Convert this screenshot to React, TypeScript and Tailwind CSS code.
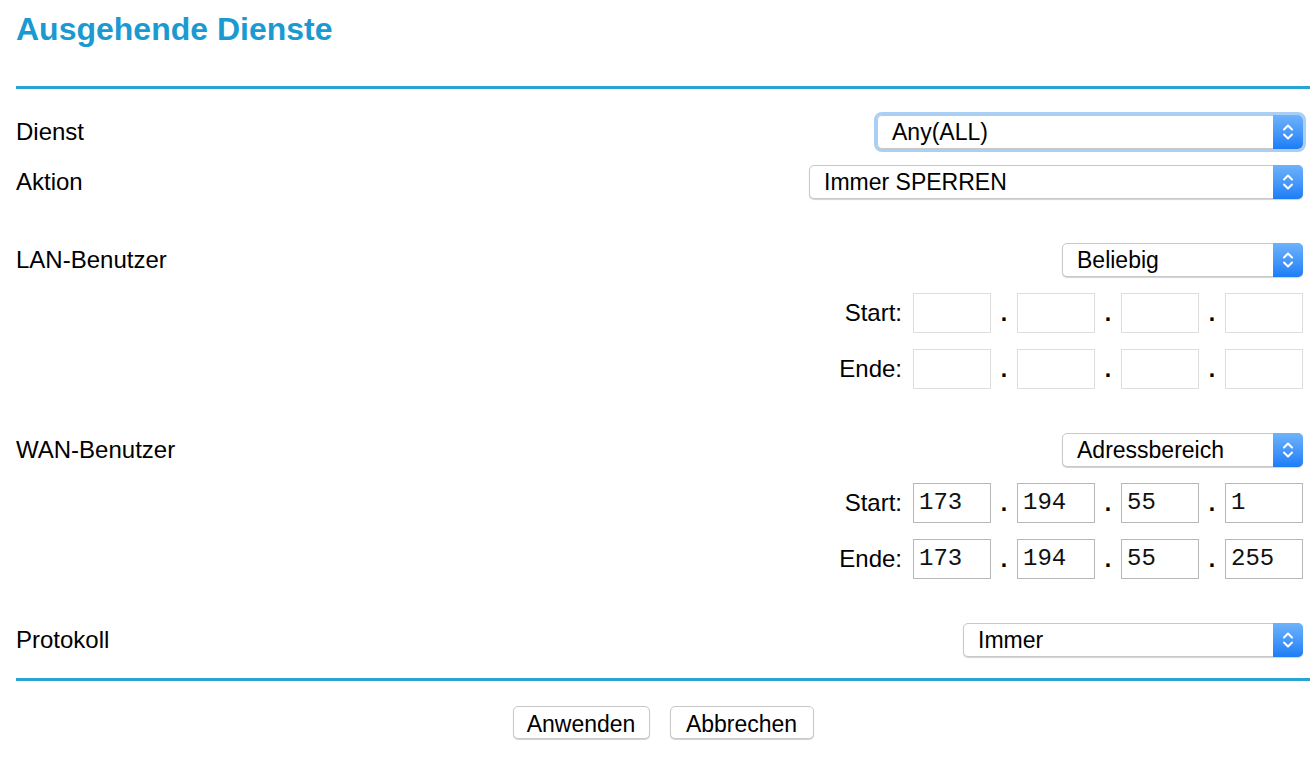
import React from "react";

const font = { fontFamily: '"Liberation Sans", Arial, Helvetica, sans-serif' };

function Select({ value, width, focus = false }: { value: string; width: string; focus?: boolean }) {
  return (
    <div
      className={`relative flex h-[34px] ${width} items-stretch rounded-[5px] border border-[#c8c8c8] bg-white shadow-[0_1px_1px_rgba(0,0,0,0.18)] ${
        focus ? "outline outline-[3px] outline-[#a9cff5] outline-offset-0" : ""
      }`}
    >
      <div className="flex flex-1 items-center pl-[14px] text-[23px] text-black">{value}</div>
      <div className="-my-px -mr-px flex w-[30px] items-center justify-center rounded-r-[5px] bg-gradient-to-b from-[#6db3fb] to-[#1b7df6]">
        <svg width="12" height="20" viewBox="0 0 12 20" fill="none">
          <path d="M2 7.5 L6 3.5 L10 7.5" stroke="white" strokeWidth="2" strokeLinecap="round" strokeLinejoin="round" />
          <path d="M2 12.5 L6 16.5 L10 12.5" stroke="white" strokeWidth="2" strokeLinecap="round" strokeLinejoin="round" />
        </svg>
      </div>
    </div>
  );
}

function IpBox({ value, filled }: { value: string; filled: boolean }) {
  return (
    <div
      className={`flex h-[40px] w-[78px] items-center border pl-[5px] text-[24px] text-[#111] ${
        filled ? "border-[#b8b8b8]" : "border-[#dedede]"
      }`}
      style={{ fontFamily: '"Courier New", "Liberation Mono", monospace' }}
    >
      {value}
    </div>
  );
}

function IpRow({ label, values }: { label: string; values: string[] }) {
  const filled = values.some((v) => v !== "");
  return (
    <div className="flex h-[56px] items-center justify-end">
      <span className="mr-[11px] text-[24px]">{label}</span>
      {values.map((v, i) => (
        <React.Fragment key={i}>
          {i > 0 && (
            <span className="flex w-[26px] justify-center text-[23px] font-bold leading-none">.</span>
          )}
          <IpBox value={v} filled={filled} />
        </React.Fragment>
      ))}
    </div>
  );
}

function Row({ label, children }: { label: string; children: React.ReactNode }) {
  return (
    <div className="flex h-[50px] items-center justify-between">
      <span className="text-[24px]">{label}</span>
      {children}
    </div>
  );
}

export default function App() {
  return (
    <div className="min-h-[774px] w-[1310px] bg-white text-black" style={font}>
      <div className="pl-[16px]">
        <h1 className="pt-[9px] text-[32px] font-bold leading-[40px] text-[#1b9ad2]">Ausgehende Dienste</h1>
        <div className="mt-[37px] h-[3px] bg-[#2aa3d3]" />
        <div className="pr-[7px]">
          <div className="mt-[18px]">
            <Row label="Dienst">
              <Select value="Any(ALL)" width="w-[426px]" focus />
            </Row>
            <Row label="Aktion">
              <Select value="Immer SPERREN" width="w-[494px]" />
            </Row>
          </div>
          <div className="mt-[28px]">
            <Row label="LAN-Benutzer">
              <Select value="Beliebig" width="w-[241px]" />
            </Row>
            <IpRow label="Start:" values={["", "", "", ""]} />
            <IpRow label="Ende:" values={["", "", "", ""]} />
          </div>
          <div className="mt-[28px]">
            <Row label="WAN-Benutzer">
              <Select value="Adressbereich" width="w-[241px]" />
            </Row>
            <IpRow label="Start:" values={["173", "194", "55", "1"]} />
            <IpRow label="Ende:" values={["173", "194", "55", "255"]} />
          </div>
          <div className="mt-[28px]">
            <Row label="Protokoll">
              <Select value="Immer" width="w-[340px]" />
            </Row>
          </div>
        </div>
        <div className="mt-[13px] h-[3px] bg-[#2aa3d3]" />
        <div className="mt-[25px] flex justify-center gap-[20px]">
          <button className="h-[33px] w-[137px] rounded-[5px] border border-[#c8c8c8] bg-white text-[23px] shadow-[0_1px_1px_rgba(0,0,0,0.18)]">
            Anwenden
          </button>
          <button className="h-[33px] w-[144px] rounded-[5px] border border-[#c8c8c8] bg-white text-[23px] shadow-[0_1px_1px_rgba(0,0,0,0.18)]">
            Abbrechen
          </button>
        </div>
      </div>
    </div>
  );
}
